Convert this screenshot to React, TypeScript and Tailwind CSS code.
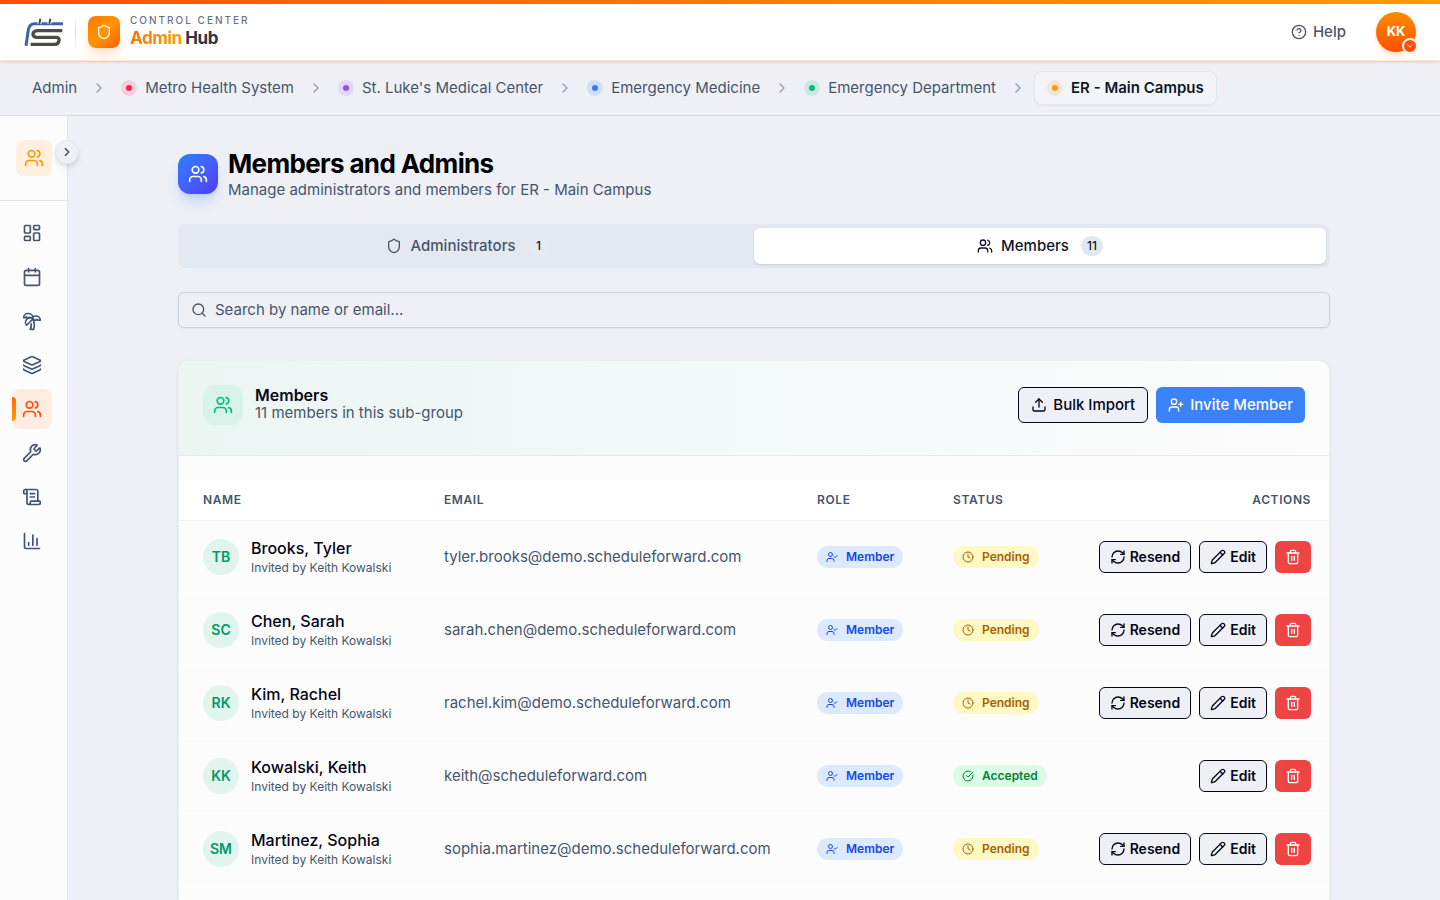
import { useState } from "react";
import {
  Calendar,
  ChartColumn,
  ChevronDown,
  ChevronRight,
  CircleCheckBig,
  CircleHelp,
  Clock,
  Layers,
  LayoutDashboard,
  Pencil,
  RefreshCw,
  ScrollText,
  Search,
  Shield,
  Trash2,
  TreePalm,
  Upload,
  UserCheck,
  UserPlus,
  Users,
  Wrench,
} from "lucide-react";

interface Member {
  initials: string;
  name: string;
  email: string;
  status: "Pending" | "Accepted";
}

const members: Member[] = [
  { initials: "TB", name: "Brooks, Tyler", email: "tyler.brooks@demo.scheduleforward.com", status: "Pending" },
  { initials: "SC", name: "Chen, Sarah", email: "sarah.chen@demo.scheduleforward.com", status: "Pending" },
  { initials: "RK", name: "Kim, Rachel", email: "rachel.kim@demo.scheduleforward.com", status: "Pending" },
  { initials: "KK", name: "Kowalski, Keith", email: "keith@scheduleforward.com", status: "Accepted" },
  { initials: "SM", name: "Martinez, Sophia", email: "sophia.martinez@demo.scheduleforward.com", status: "Pending" },
];

const crumbs = [
  { label: "Metro Health System", dot: "bg-[#ff2056]", halo: "bg-[#ff2056]/15" },
  { label: "St. Luke's Medical Center", dot: "bg-[#8e51ff]", halo: "bg-[#8e51ff]/15" },
  { label: "Emergency Medicine", dot: "bg-[#2b7fff]", halo: "bg-[#2b7fff]/15" },
  { label: "Emergency Department", dot: "bg-[#00bc7d]", halo: "bg-[#00bc7d]/15" },
];

const navItems = [
  { label: "Dashboard", icon: LayoutDashboard },
  { label: "Schedule", icon: Calendar },
  { label: "Time off", icon: TreePalm },
  { label: "Templates", icon: Layers },
  { label: "Members", icon: Users, active: true },
  { label: "Settings", icon: Wrench },
  { label: "Audit log", icon: ScrollText },
  { label: "Reports", icon: ChartColumn },
];

function Logo() {
  return (
    <svg viewBox="0 0 117 90" className="h-[30px] w-[39px]" fill="none" aria-label="Schedule Forward" role="img">
      <path d="M6 86 L13 38 Q17 20 31 20 H117" stroke="#3f62ad" strokeWidth="9" />
      <path d="M46 21 L49 5 M76 21 L79 5" stroke="#fff" strokeWidth="12" />
      <path d="M46 21 L49 5 M76 21 L79 5" stroke="#4b4b4b" strokeWidth="6" />
      <path d="M115 41 H40 Q28 42 27 51 Q27 60 38 61 H97 Q107 62 105 71 Q103 82 93 82 H20" stroke="#4b4b48" strokeWidth="10" />
    </svg>
  );
}

function Header() {
  return (
    <header className="relative z-20 border-b border-[#ffe8d4] bg-white shadow-sm">
      <div className="h-1 bg-gradient-to-r from-[#ff4d00] to-[#ff9a00]" />
      <div className="flex h-14 items-center justify-between px-6">
        <div className="flex items-center gap-3">
          <Logo />
          <div className="h-8 w-px bg-gradient-to-b from-transparent via-gray-300 to-transparent" />
          <div className="flex items-center gap-2.5">
            <div className="flex size-8 items-center justify-center rounded-lg bg-gradient-to-br from-[#ff7a00] via-[#ff9500] to-[#ff5a00] shadow-lg shadow-orange-500/20">
              <Shield className="size-4 text-white" />
            </div>
            <div>
              <p className="text-[10px] leading-3 font-medium tracking-[2px] text-gray-500">CONTROL CENTER</p>
              <p className="text-[17px] leading-6 font-bold tracking-tight text-[#2f3542]">
                <span className="bg-gradient-to-r from-[#ff7300] to-[#ff9a00] bg-clip-text text-transparent">Admin</span> Hub
              </p>
            </div>
          </div>
        </div>
        <div className="flex items-center gap-[30px]">
          <a href="#help" className="flex items-center gap-1.5 text-[15px] font-medium text-gray-600">
            <CircleHelp className="size-4" />
            Help
          </a>
          <button
            aria-label="Account menu"
            className="relative flex size-10 items-center justify-center rounded-full bg-gradient-to-b from-[#ff8a00] to-[#ff4d00] text-[13px] font-bold text-white shadow-md shadow-orange-500/20"
          >
            KK
            <span className="absolute -right-0.5 -bottom-0.5 flex size-4 items-center justify-center rounded-full border-2 border-gray-100 bg-[#ff4d00]">
              <ChevronDown className="size-2.5" />
            </span>
          </button>
        </div>
      </div>
    </header>
  );
}

function Dot({ dot, halo }: { dot: string; halo: string }) {
  return (
    <span className={`flex size-4 items-center justify-center rounded-full ${halo}`}>
      <span className={`size-1.5 rounded-full ${dot}`} />
    </span>
  );
}

function Breadcrumbs() {
  return (
    <nav
      aria-label="Breadcrumb"
      className="flex h-[55px] items-center border-b border-[#d8dce3] bg-[#eff0f5] px-8 text-[15px] whitespace-nowrap text-slate-600"
    >
      <a href="#admin">Admin</a>
      {crumbs.map((crumb) => (
        <span key={crumb.label} className="flex items-center">
          <ChevronRight className="mx-3.5 size-4 text-slate-400" />
          <a href="#group" className="flex items-center gap-2">
            <Dot dot={crumb.dot} halo={crumb.halo} />
            {crumb.label}
          </a>
        </span>
      ))}
      <ChevronRight className="mr-2 ml-3.5 size-4 text-slate-400" />
      <span
        aria-current="page"
        className="flex h-[34px] items-center gap-2 rounded-lg border border-slate-200 bg-slate-100 px-3 font-semibold text-slate-900 shadow-xs"
      >
        <Dot dot="bg-[#fe9a00]" halo="bg-[#fe9a00]/15" />
        ER - Main Campus
      </span>
    </nav>
  );
}

function Sidebar() {
  return (
    <aside className="relative z-10 w-[68px] shrink-0 border-r border-[#dfe5ee] bg-[#fcfcfc]">
      <div className="h-[85px] border-b border-[#dbe5f0] px-4 pt-6">
        <div className="flex size-9 items-center justify-center rounded-lg bg-[#ffefdf] text-[#fe9a00]">
          <Users className="size-5" />
        </div>
      </div>
      <button
        aria-label="Expand sidebar"
        className="absolute top-6 -right-3 flex size-6 items-center justify-center rounded-full border border-slate-200 bg-[#eff0f5] text-slate-700 shadow-md"
      >
        <ChevronRight className="size-3.5" />
      </button>
      <nav aria-label="Main" className="flex flex-col gap-1 px-3 pt-3">
        {navItems.map(({ label, icon: Icon, active }) => (
          <a
            key={label}
            href={`#${label}`}
            aria-label={label}
            className={`relative flex size-10 items-center justify-center rounded-lg ${
              active ? "bg-[#ffece2] text-[#ff4d00]" : "text-slate-600"
            }`}
          >
            {active && (
              <span className="absolute top-2 left-0 h-6 w-1 rounded-r-full bg-gradient-to-b from-[#ff6a00] to-[#ff9a00]" />
            )}
            <Icon className="size-5" />
          </a>
        ))}
      </nav>
    </aside>
  );
}

function StatusBadge({ status }: { status: Member["status"] }) {
  if (status === "Accepted") {
    return (
      <span className="flex h-[22px] w-fit items-center gap-2 rounded-full bg-green-100 px-[9px] text-xs font-semibold text-green-700">
        <CircleCheckBig className="size-3" />
        Accepted
      </span>
    );
  }
  return (
    <span className="flex h-[22px] w-fit items-center gap-2 rounded-full bg-yellow-100 px-[9px] text-xs font-semibold text-yellow-700">
      <Clock className="size-3" />
      Pending
    </span>
  );
}

function MemberRow({ member }: { member: Member }) {
  const outline =
    "flex h-8 items-center gap-1 rounded-md border border-[#020618] bg-[#eff0f5] px-[10px] text-sm font-semibold text-[#020618]";

  return (
    <tr className="h-[73px] border-b border-white">
      <td className="pl-6">
        <div className="flex items-center gap-3">
          <span className="flex size-9 items-center justify-center rounded-full bg-[#e1f5ee] text-sm font-semibold text-[#009966]">
            {member.initials}
          </span>
          <div className="pb-0.5">
            <p className="text-base leading-6 font-medium text-[#020618]">{member.name}</p>
            <p className="text-xs leading-4 text-slate-600">Invited by Keith Kowalski</p>
          </div>
        </div>
      </td>
      <td className="px-4 pt-0.5 text-[15px] text-slate-600">{member.email}</td>
      <td className="px-4">
        <span className="flex h-[22px] w-fit items-center gap-2 rounded-full bg-blue-100 px-[9px] text-xs font-semibold text-blue-700">
          <UserCheck className="size-3" />
          Member
        </span>
      </td>
      <td className="px-4">
        <StatusBadge status={member.status} />
      </td>
      <td className="pr-[18px]">
        <div className="flex justify-end gap-2">
          {member.status === "Pending" && (
            <button className={outline}>
              <RefreshCw className="size-4" />
              Resend
            </button>
          )}
          <button className={outline}>
            <Pencil className="size-4" />
            Edit
          </button>
          <button
            aria-label={`Remove ${member.name}`}
            className="flex h-8 w-9 items-center justify-center rounded-md bg-[#ef4444] text-white"
          >
            <Trash2 className="size-4" />
          </button>
        </div>
      </td>
    </tr>
  );
}

export default function App() {
  const [tab, setTab] = useState("members");
  const [query, setQuery] = useState("");

  const visible = members.filter((m) => `${m.name} ${m.email}`.toLowerCase().includes(query.toLowerCase()));
  const tabClass = (name: string) =>
    `flex flex-1 items-center justify-center gap-2 rounded-md text-[15px] font-medium ${
      tab === name ? "bg-white text-slate-900 shadow-sm" : "text-slate-600"
    }`;

  return (
    <div className="flex h-screen flex-col overflow-hidden bg-[#eff0f5] font-[Inter,sans-serif]">
      <Header />
      <Breadcrumbs />
      <div className="flex min-h-0 flex-1">
        <Sidebar />
        <main className="flex min-w-0 flex-1 justify-center overflow-hidden px-8 pt-8">
          <div className="flex w-full max-w-6xl flex-col">
            {/* Page title */}
            <div className="flex items-center gap-2.5">
              <div className="flex size-10 items-center justify-center rounded-xl bg-gradient-to-br from-[#2b7fff] to-[#4f39f6] text-white shadow-lg shadow-blue-500/25">
                <Users className="size-5" />
              </div>
              <div>
                <h1 className="text-[26px] leading-8 font-bold tracking-tight text-black">Members and Admins</h1>
                <p className="text-[15px] leading-5 text-slate-600">
                  Manage administrators and members for ER - Main Campus
                </p>
              </div>
            </div>

            {/* Tabs */}
            <div role="tablist" className="mt-6 flex h-11 shrink-0 rounded-lg bg-[#e4e9f1] p-1">
              <button role="tab" aria-selected={tab === "admins"} onClick={() => setTab("admins")} className={tabClass("admins")}>
                <Shield className="size-4" />
                Administrators
                <span className="ml-1 flex h-5 min-w-[22px] items-center justify-center rounded-full bg-[#e6e9f1] text-xs text-slate-900">
                  1
                </span>
              </button>
              <button role="tab" aria-selected={tab === "members"} onClick={() => setTab("members")} className={tabClass("members")}>
                <Users className="size-4" />
                Members
                <span className="ml-1 flex h-5 min-w-[22px] items-center justify-center rounded-full bg-[#e2e8f0] text-xs text-slate-900">
                  11
                </span>
              </button>
            </div>

            {/* Search */}
            <label className="mt-6 flex h-9 shrink-0 items-center gap-2 rounded-md border border-[#cad0dc] px-3 shadow-xs">
              <Search className="size-4 text-slate-600" />
              <input
                aria-label="Search by name or email"
                placeholder="Search by name or email..."
                value={query}
                onChange={(e) => setQuery(e.target.value)}
                className="flex-1 bg-transparent text-[15px] text-slate-900 outline-none placeholder:text-slate-600"
              />
            </label>

            {/* Members card */}
            <section className="mt-8 flex-1 overflow-hidden rounded-t-xl border border-b-0 border-[#edf0f3] bg-[#fcfcfc] shadow-sm">
              <div className="flex h-[95px] justify-between border-b border-[#e6ebf1] bg-gradient-to-r from-[#ebf6f3] via-[#f4f9f9] to-[#fcfcfc] px-6 pt-6">
                <div className="flex h-10 items-center gap-3">
                  <span className="flex size-10 items-center justify-center rounded-xl bg-[#d8f3e9] text-[#00bc7d]">
                    <Users className="size-5" />
                  </span>
                  <div>
                    <h2 className="text-base leading-4 font-semibold text-[#020618]">Members</h2>
                    <p className="text-[15px] leading-5 text-slate-600">11 members in this sub-group</p>
                  </div>
                </div>
                <div className="flex h-10 items-center gap-2">
                  <button className="flex h-9 items-center gap-1.5 rounded-md border border-[#020618] bg-[#eff0f5] px-3 text-[15px] font-medium text-[#020618]">
                    <Upload className="size-4" />
                    Bulk Import
                  </button>
                  <button className="flex h-9 items-center gap-1.5 rounded-md bg-[#3b82f6] px-3 text-[15px] font-medium text-white">
                    <UserPlus className="size-4" />
                    Invite Member
                  </button>
                </div>
              </div>
              <table className="mt-6 w-full table-fixed text-left">
                <thead>
                  <tr className="h-10 border-b border-[#f0f2f5] bg-white text-xs tracking-wider text-slate-600">
                    <th className="w-[249px] pl-6 font-semibold">NAME</th>
                    <th className="w-[373px] px-4 font-semibold">EMAIL</th>
                    <th className="w-[136px] px-4 font-semibold">ROLE</th>
                    <th className="w-[136px] px-4 font-semibold">STATUS</th>
                    <th className="pr-[18px] text-right font-semibold">ACTIONS</th>
                  </tr>
                </thead>
                <tbody>
                  {visible.map((member) => (
                    <MemberRow key={member.email} member={member} />
                  ))}
                </tbody>
              </table>
            </section>
          </div>
        </main>
      </div>
    </div>
  );
}
